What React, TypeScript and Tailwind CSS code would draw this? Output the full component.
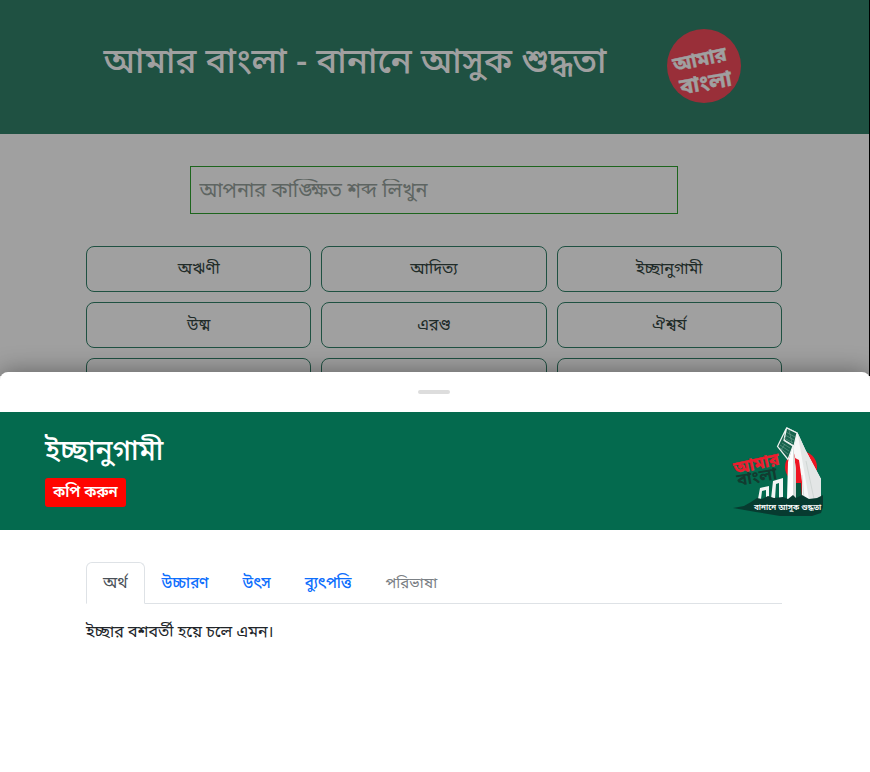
import { useState } from "react";

const words = ["অঋণী", "আদিত্য", "ইচ্ছানুগামী", "উষ্ম", "এরণ্ড", "ঐশ্বর্য"];

const tabs = [
  { name: "অর্থ", disabled: false },
  { name: "উচ্চারণ", disabled: false },
  { name: "উৎস", disabled: false },
  { name: "ব্যুৎপত্তি", disabled: false },
  { name: "পরিভাষা", disabled: true },
];

function RoundLogo() {
  return (
    <svg viewBox="0 0 74 74" className="h-[74px] w-[74px] shrink-0" aria-hidden="true">
      <circle cx="37" cy="37" r="37" fill="#992f39" />
      <g fill="#a0a0a0" stroke="#a0a0a0" strokeWidth="0.4" fontSize="20" fontWeight="700" textAnchor="middle">
        <text transform="translate(34 37) rotate(-12)">আমার</text>
        <text fontSize="22" transform="translate(40 61) rotate(-10)">বাংলা</text>
      </g>
    </svg>
  );
}

function MonumentLogo() {
  return (
    <svg viewBox="0 0 92 92" className="h-[92px] w-[92px] shrink-0" aria-hidden="true">
      <circle cx="70" cy="42" r="16" fill="#ee1522" />
      <path d="M63 58h10v18H63z" fill="#075740" />
      <path d="M66 44l-1 14M69 46v12" stroke="#074b39" strokeWidth="0.8" />
      {/* tall right-hand pylons */}
      <path d="M55.500 2l11 5.500 8 17.500 15.500 29v20H71l-7-42z" fill="#f7f8f8" />
      <path d="M66.500 7.500L78 74h12V54L74.500 25z" fill="#e3e6e6" />
      <path d="M71 50l2 24M75 36l8 38" stroke="#c3cbc8" strokeWidth="0.6" />
      <path d="M64 33l4 2 3 22v17h-7z" fill="#ee1522" />
      <path d="M64 58h6l1 16h-7z" fill="#075740" />
      {/* left pylon */}
      <path d="M53 15l9 5 3 26v28h-9l1-37 4-14z" fill="#fff" />
      <path d="M62 20l3 26v28h-3z" fill="#d5dcda" />
      {/* glass facets */}
      <path d="M55.500 3L53 15l10 6 3-13z" fill="#17634d" stroke="#eef3f1" strokeWidth="1.200" />
      <path d="M55 4l-8.500 17.500 10.500 13L62 21l-9-5.500z" fill="#17634d" stroke="#eef3f1" strokeWidth="1.200" />
      <path d="M55 7l9 5M54 10l9 5M53 13l9 5M58 5l3 13M51 18l8 5M49 20l9 6M49 23l8 6M54 19l-4 6" stroke="#6f9f91" strokeWidth="0.600" />
      {/* low blocks */}
      <path d="M27 74l2-11 9-2v13h-3v-9l-4 1-1 8z" fill="#f2f5f4" />
      <path d="M40 74l2-18 10-3v21h-4V58l-3 1-1 15z" fill="#f2f5f4" />
      <path d="M2 83l11-2 7-4 6-4 5 1 6-3 6 2 9-1 5 2 5-4 3 3 6-3 7 4 8-1 6-3v12l-2 6-9 3H49l-24-4z" fill="#073b30" />
      <g fontWeight="700" fontSize="17">
        <text transform="translate(4 49) rotate(-12)" fill="#ee1c2e" stroke="#ee1c2e" strokeWidth="0.4">আমার</text>
        <text transform="translate(7 61) rotate(-10)" fill="#123b30">বাংলা</text>
      </g>
      <text x="23" y="85" fill="#fff" fontSize="8" fontWeight="600">বানানে আসুক শুদ্ধতা</text>
    </svg>
  );
}

export default function App() {
  const [active, setActive] = useState("অর্থ");
  return (
    <div className="relative min-h-screen overflow-hidden bg-white font-['Noto_Sans_Bengali','Noto_Sans',sans-serif] text-base leading-6 text-[#212529]">
      <div className="h-[calc(100vh-396px)] overflow-hidden border-r border-black bg-[#a0a0a0]">
        <header className="flex h-[134px] items-center justify-center gap-[61px] bg-[#1f5142] pb-0.5 pr-6 text-[#a0a0a0]">
          <h1 className="pb-1 text-[35px] font-medium leading-[42px]">আমার বাংলা - বানানে আসুক শুদ্ধতা</h1>
          <RoundLogo />
        </header>
        <div className="pr-px">
          <main className="mx-auto max-w-[696px] pt-8">
            <input
              type="text"
              aria-label="শব্দ"
              placeholder="আপনার কাঙ্ক্ষিত শব্দ লিখুন"
              className="mx-auto block h-12 w-[70%] border border-[#1d651d] bg-transparent px-2 pt-1 text-xl text-[#29302d] placeholder:text-[#5e6562] focus:outline-none"
            />
            <div className="mt-8 grid grid-cols-3 gap-[10px]">
              {words.map((word) => (
                <button key={word} type="button" className="h-[46px] rounded-lg border border-[#1f5142] pt-0.5 text-[#202b28]">
                  {word}
                </button>
              ))}
              {[0, 1, 2].map((n) => (
                <div key={n} className="h-[46px] rounded-lg border border-[#1f5142]" />
              ))}
            </div>
          </main>
        </div>
      </div>

      <section
        role="dialog"
        aria-labelledby="entry-word"
        className="absolute inset-x-0 bottom-0 h-[400px] rounded-t-lg bg-white shadow-[0_0_24px_rgba(0,0,0,0.4)]"
      >
        <div className="flex h-10 items-center justify-center pr-0.5">
          <div className="h-1 w-8 rounded-full bg-[#dddddd]" />
        </div>
        <div className="flex h-[118px] items-center justify-between bg-[#046a4e] pl-[45px] pr-[47px]">
          <div className="flex flex-col items-start gap-2 text-white">
            <h2 id="entry-word" className="text-[28px] font-medium leading-[34px]">ইচ্ছানুগামী</h2>
            <button type="button" className="h-[29px] rounded-[3px] bg-[#ff0500] px-2 pt-0.5 text-[15px] font-semibold leading-5">
              কপি করুন
            </button>
          </div>
          <MonumentLogo />
        </div>
        <div className="pr-0.5">
          <div className="mx-auto max-w-[696px] pt-8">
            <div role="tablist" className="flex border-b border-[#dee2e6]">
              {tabs.map((tab) => (
                <button
                  key={tab.name}
                  type="button"
                  role="tab"
                  disabled={tab.disabled}
                  aria-selected={active === tab.name}
                  onClick={() => setActive(tab.name)}
                  className={
                    "-mb-px h-[42px] rounded-t-md border px-4 pt-0.5 " +
                    (active === tab.name
                      ? "border-[#dee2e6] border-b-white bg-white text-[#495057]"
                      : tab.disabled
                        ? "border-transparent text-[15px] text-[#7b8085]"
                        : "border-transparent text-[15px] font-medium text-[#0d6efd]")
                  }
                >
                  {tab.name}
                </button>
              ))}
            </div>
            <p role="tabpanel" className="pt-[17px]">ইচ্ছার বশবর্তী হয়ে চলে এমন।</p>
          </div>
        </div>
      </section>
    </div>
  );
}
